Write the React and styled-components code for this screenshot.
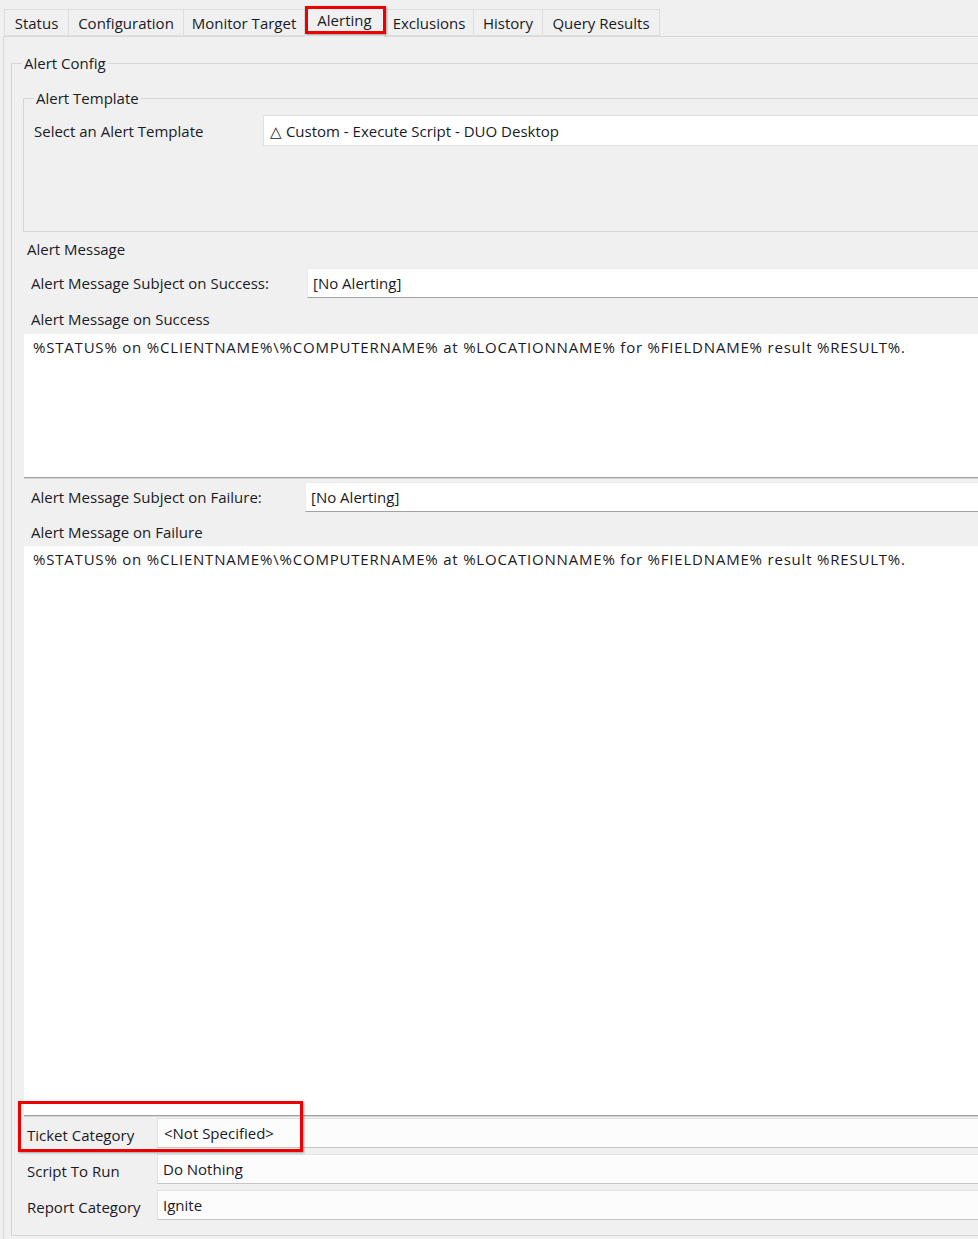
import React from "react";
import styled, { createGlobalStyle } from "styled-components";

const Global = createGlobalStyle`
  html, body { margin: 0; padding: 0; background: #f0f0f0; overflow: hidden; }
  body { font-family: "Open Sans", "Noto Sans", sans-serif; font-size: 15px; color: #1a1a26; }
  *, *::before, *::after { box-sizing: border-box; }
`;

const Page = styled.div`
  width: 1012px;
  height: 1239px;
  background: #f0f0f0;
`;

const TabBar = styled.div`
  display: flex;
  align-items: flex-end;
  height: 36px;
  padding-left: 4px;
`;

const Tab = styled.div`
  position: relative;
  display: flex;
  align-items: center;
  justify-content: center;
  width: ${(p) => p.$w}px;
  height: ${(p) => (p.$active ? 31 : 27)}px;
  margin-bottom: ${(p) => (p.$active ? -1 : 0)}px;
  padding-bottom: ${(p) => (p.$active ? 4 : 0)}px;
  background: #f0f0f0;
  border: 1px solid #dedede;
  border-bottom: ${(p) => (p.$active ? "none" : "1px solid #dedede")};
  margin-right: -1px;
  white-space: nowrap;
  z-index: ${(p) => (p.$active ? 2 : 1)};
  ${(p) =>
    p.$active &&
    `
    &::after {
      content: "";
      position: absolute;
      left: 0px;
      top: -1px;
      width: 81px;
      height: 28px;
      border: 3px solid #ec0000;
      box-shadow: 1px 1px 2px rgba(0,0,0,0.35);
    }
  `}
`;

const Panel = styled.div`
  margin-left: 3px;
  border: 1px solid #d9d9d9;
  border-right: none;
  padding: 16px 0 4px 7px;
  background: #f0f0f0;
`;

const Group = styled.fieldset`
  margin: ${(p) => p.$m || "0"};
  padding: ${(p) => p.$p || "0"};
  border: 1px solid #d6d6d6;
  min-width: 0;
`;

const Legend = styled.legend`
  margin-left: 10px;
  padding: 0 2px;
  line-height: 20px;
  font-size: 15px;
`;

const Row = styled.div`
  display: flex;
  align-items: ${(p) => (p.$end ? "flex-end" : "center")};
  margin: ${(p) => p.$m || "0"};
  position: relative;
`;

const Label = styled.div`
  flex: 0 0 ${(p) => p.$w}px;
  line-height: 20px;
  padding-bottom: ${(p) => p.$pb || 0}px;
  white-space: nowrap;
`;

const SectionLabel = styled.div`
  line-height: 20px;
  margin: ${(p) => p.$m || "0"};
  white-space: nowrap;
`;

const Select = styled.div`
  flex: 1;
  height: 31px;
  display: flex;
  align-items: center;
  padding-left: 6px;
  background: #ffffff;
  border: 1px solid #e0e0e0;
  border-right: none;
  white-space: nowrap;
`;

const Input = styled.div`
  flex: 1;
  height: 30px;
  display: flex;
  align-items: center;
  padding-left: ${(p) => p.$pl || 5}px;
  background: ${(p) => (p.$soft ? "#fcfcfc" : "#ffffff")};
  border-top: 1px solid ${(p) => (p.$soft ? "#e2e2e2" : "#ececec")};
  border-left: 1px solid ${(p) => (p.$soft ? "#e2e2e2" : "#ececec")};
  border-bottom: 1px solid ${(p) => (p.$soft ? "#c6c6c6" : "#a2a2a2")};
  white-space: nowrap;
`;

const TextBox = styled.div`
  height: ${(p) => p.$h}px;
  margin: ${(p) => p.$m || "0"};
  padding: 3px 9px;
  line-height: 20px;
  letter-spacing: 0.8px;
  background: #ffffff;
  border-bottom: 1px solid #a0a0a0;
  box-shadow: 0 1px 0 #d6d6d6;
  white-space: nowrap;
`;

const Highlight = styled.div`
  position: absolute;
  left: ${(p) => p.$x}px;
  top: ${(p) => p.$y}px;
  width: ${(p) => p.$w}px;
  height: ${(p) => p.$h}px;
  border: 3px solid #ec0000;
  box-shadow: 1px 1px 2px rgba(0, 0, 0, 0.35);
  pointer-events: none;
  z-index: 3;
`;

const tabs = [
  { t: "Status", w: 65 },
  { t: "Configuration", w: 116 },
  { t: "Monitor Target", w: 122 },
  { t: "Alerting", w: 81, active: true },
  { t: "Exclusions", w: 90 },
  { t: "History", w: 70 },
  { t: "Query Results", w: 118 },
];

const MSG =
  "%STATUS% on %CLIENTNAME%\\%COMPUTERNAME% at %LOCATIONNAME% for %FIELDNAME% result %RESULT%.";

export default function App() {
  return (
    <>
      <Global />
      <Page>
        <TabBar>
          {tabs.map((t) => (
            <Tab key={t.t} $w={t.w} $active={t.active}>
              {t.t}
            </Tab>
          ))}
        </TabBar>
        <Panel>
          <Group>
            <Legend>Alert Config</Legend>
            <Group $m="15px 0 0 11px" $p="7px 0 85px 0">
              <Legend>Alert Template</Legend>
              <Row $m="0 0 0 10px">
                <Label $w={229}>Select an Alert Template</Label>
                <Select>△ Custom - Execute Script - DUO Desktop</Select>
              </Row>
            </Group>

            <SectionLabel $m="7px 0 0 15px">Alert Message</SectionLabel>
            <Row $m="9px 0 0 19px">
              <Label $w={276}>Alert Message Subject on Success:</Label>
              <Input>[No Alerting]</Input>
            </Row>
            <SectionLabel $m="11px 0 0 19px">Alert Message on Success</SectionLabel>
            <TextBox $h={144} $m="5px 0 0 12px">{MSG}</TextBox>

            <Row $m="4px 0 0 19px">
              <Label $w={274}>Alert Message Subject on Failure:</Label>
              <Input>[No Alerting]</Input>
            </Row>
            <SectionLabel $m="10px 0 0 19px">Alert Message on Failure</SectionLabel>
            <TextBox $h={570} $m="4px 0 0 12px">{MSG}</TextBox>

            <Row $end $m="2px 0 0 15px">
              <Label $w={130} $pb={3}>Ticket Category</Label>
              <Input $soft $pl={6}>&lt;Not Specified&gt;</Input>
              <Highlight $x={-9} $y={-17} $w={285} $h={51} />
            </Row>
            <Row $end $m="6px 0 0 15px">
              <Label $w={130} $pb={3}>Script To Run</Label>
              <Input $soft>Do Nothing</Input>
            </Row>
            <Row $end $m="6px 0 15px 15px">
              <Label $w={130} $pb={3}>Report Category</Label>
              <Input $soft>Ignite</Input>
            </Row>
          </Group>
        </Panel>
      </Page>
    </>
  );
}
